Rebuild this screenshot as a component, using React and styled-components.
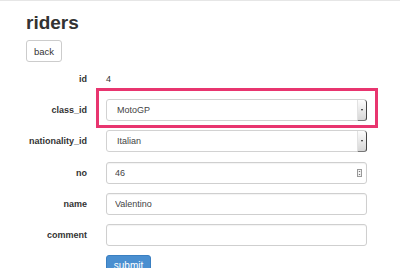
import React from 'react'
import styled, { createGlobalStyle } from 'styled-components'

const GlobalStyle = createGlobalStyle`
  html, body {
    margin: 0;
    padding: 0;
    overflow: hidden;
    background: #fff;
  }
  body {
    font-family: "Liberation Sans", Arial, sans-serif;
    color: #333;
  }
`

const Page = styled.div`
  border-top: 1px solid #e6e6e6;
  padding: 0 0 0 26px;
`

const Title = styled.h2`
  font-size: 19px;
  font-weight: 700;
  line-height: 22px;
  margin: 11px 0 6px 0;
  color: #333;
`

const Button = styled.button`
  font-family: inherit;
  font-size: 9.5px;
  height: 21px;
  padding: 0 7px;
  border-radius: 3px;
  border: 1px solid ${({primary}) => primary ? '#3a7fc1' : '#ccc'};
  background: ${({primary}) => primary ? '#4a8fd0' : '#fff'};
  color: ${({primary}) => primary ? '#fff' : '#333'};
  cursor: pointer;
`

const BackButton = styled(Button)`
  width: 36px;
  height: 22px;
  padding: 0;
`

const SubmitButton = styled(Button)`
  display: flex;
  justify-content: center;
  width: 45px;
  height: 24px;
  padding: 4px 0 0 0;
  font-size: 10px;
  line-height: 12px;
`

const Form = styled.form`
  display: grid;
  grid-template-columns: 61px 261px;
  column-gap: 19px;
  row-gap: 9.2px;
  grid-auto-rows: 22px;
  margin-top: 6px;
`

const Label = styled.label`
  font-size: 9px;
  font-weight: 700;
  text-align: right;
  display: flex;
  align-items: center;
  justify-content: flex-end;
  color: #333;
`

const Static = styled.div`
  font-size: 9px;
  display: flex;
  align-items: center;
  color: #333;
`

const Field = styled.div`
  position: relative;
  display: flex;
`

const Input = styled.input`
  box-sizing: border-box;
  width: 100%;
  height: 22px;
  border: 1px solid #cfcfcf;
  border-radius: 3px;
  padding: 0 ${({spin}) => spin ? '16px' : '8px'} 0 8px;
  font-family: inherit;
  font-size: 9px;
  color: #444;
  outline: none;
  box-shadow: inset 0 1px 1px rgba(0,0,0,0.05);
`

const SelectBox = styled.div`
  box-sizing: border-box;
  width: 100%;
  height: 22px;
  border: 1px solid #d2d2d2;
  border-radius: 3px;
  display: flex;
  align-items: stretch;
  font-size: 9px;
  color: #444;
  background: #fff;
`

const SelectText = styled.span`
  flex: 1;
  display: flex;
  align-items: center;
  padding-left: 10px;
`

const SelectArrow = styled.span`
  width: 8px;
  margin: 0 -1px -1px 0;
  background: linear-gradient(#fdfdfd, #d6d6d6);
  border-left: 1px solid #e2e2e2;
  border-right: 1px solid #444;
  border-bottom: 1px solid #777;
  border-radius: 0 3px 3px 0;
  display: flex;
  align-items: center;
  justify-content: center;

  &::after {
    content: '';
    border-left: 1.5px solid transparent;
    border-right: 1.5px solid transparent;
    border-top: 2px solid #222;
  }
`

const Spinner = styled.svg`
  position: absolute;
  right: 5px;
  top: 7px;
`

const Highlight = styled.div`
  position: absolute;
  left: -10px;
  right: -11px;
  top: -11px;
  bottom: -7px;
  border: 3px solid #e8356f;
  pointer-events: none;
`

const Select = ({value}) => (
  <SelectBox>
    <SelectText>{value}</SelectText>
    <SelectArrow />
  </SelectBox>
)

export default function App() {
  return (
    <>
      <GlobalStyle />
      <Page>
        <Title>riders</Title>
        <BackButton type="button">back</BackButton>
        <Form onSubmit={e => e.preventDefault()}>
          <Label>id</Label>
          <Static>4</Static>

          <Label>class_id</Label>
          <Field>
            <Select value="MotoGP" />
            <Highlight />
          </Field>

          <Label>nationality_id</Label>
          <Field>
            <Select value="Italian" />
          </Field>

          <Label>no</Label>
          <Field>
            <Input spin defaultValue="46" />
            <Spinner width="5" height="8" viewBox="0 0 5 8">
              <rect x="0.5" y="0.5" width="4" height="7" fill="#f4f4f4" stroke="#999" strokeWidth="1" />
              <path d="M1.5 3 L2.5 2 L3.5 3 Z M1.5 5 L2.5 6 L3.5 5 Z" fill="#555" />
            </Spinner>
          </Field>

          <Label>name</Label>
          <Field>
            <Input defaultValue="Valentino" />
          </Field>

          <Label>comment</Label>
          <Field>
            <Input defaultValue="" />
          </Field>

          <span />
          <div>
            <SubmitButton primary type="submit">submit</SubmitButton>
          </div>
        </Form>
      </Page>
    </>
  )
}
